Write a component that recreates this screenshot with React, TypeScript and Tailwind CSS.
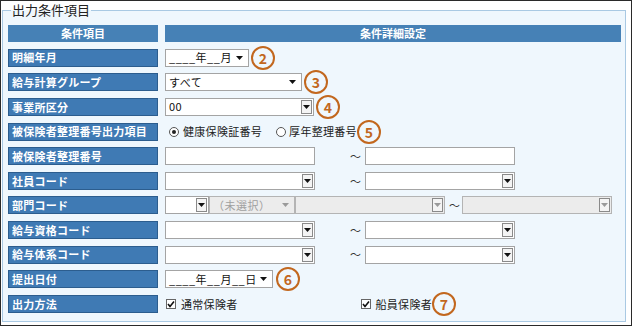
import React from "react";

const jp = { fontFamily: '"Noto Sans CJK JP", "Noto Sans", sans-serif' };

// 丸数字 (orange ring)
function Mark({ n }: { n: number }) {
  return (
    <div className="w-[24px] h-[24px] rounded-full border-2 border-[#c2671e] flex items-center justify-center text-[#c2671e] text-[14px] font-bold leading-none shrink-0">
      {n}
    </div>
  );
}

function Arrow({ boxed, disabled }: { boxed?: boolean; disabled?: boolean }) {
  return (
    <div
      className={
        boxed
          ? "w-[11px] h-[14px] mr-[1px] border border-[#8a8a8a] bg-[#f4f4f4] flex items-center justify-center shrink-0"
          : "w-[14px] h-[14px] mr-[2px] flex items-center justify-center shrink-0"
      }
    >
      <svg width="7" height="4" viewBox="0 0 7 4">
        <path d="M0 0 L7 0 L3.5 4 Z" fill={disabled ? "#9a9a9a" : "#111"} />
      </svg>
    </div>
  );
}

function Select({
  w,
  text,
  boxed = true,
  disabled,
  gray,
}: {
  w: number;
  text?: string;
  boxed?: boolean;
  disabled?: boolean;
  gray?: boolean;
}) {
  return (
    <div
      className={`h-[18px] border flex items-center shrink-0 ${
        gray ? "bg-[#ececec] border-[#b4b4b4]" : "bg-white border-[#a4a4a4]"
      }`}
      style={{ width: w }}
    >
      <span
        className={`flex-1 pl-[3px] text-[11px] tracking-[0.5px] leading-none whitespace-nowrap ${
          disabled ? "text-[#a0a0a0]" : "text-[#111]"
        }`}
      >
        {text}
      </span>
      <Arrow boxed={boxed} disabled={disabled} />
    </div>
  );
}

function Input({ w }: { w: number }) {
  return <div className="h-[18px] bg-white border border-[#a4a4a4] shrink-0" style={{ width: w }} />;
}

function Tilde({ w, pr }: { w: number; pr: number }) {
  return (
    <div className="text-[11px] text-[#333] text-right shrink-0" style={{ width: w, paddingRight: pr }}>
      ～
    </div>
  );
}

function Radio({ on }: { on?: boolean }) {
  return (
    <div className="w-[10px] h-[10px] rounded-full border border-[#555] bg-white flex items-center justify-center shrink-0">
      {on && <div className="w-[4px] h-[4px] rounded-full bg-[#222]" />}
    </div>
  );
}

function Check() {
  return (
    <div className="w-[10px] h-[10px] border border-[#666] bg-white flex items-center justify-center shrink-0">
      <svg width="8" height="8" viewBox="0 0 8 8">
        <path d="M1 4 L3 6.5 L7 1.5" stroke="#111" strokeWidth="1.6" fill="none" />
      </svg>
    </div>
  );
}

const rows: { label: string; body: React.ReactNode }[] = [
  {
    label: "明細年月",
    body: (
      <div className="flex items-center gap-[2px]">
        <Select w={84} text="____年__月" boxed={false} />
        <Mark n={2} />
      </div>
    ),
  },
  {
    label: "給与計算グループ",
    body: (
      <div className="flex items-center gap-[2px]">
        <Select w={137} text="すべて" boxed={false} />
        <Mark n={3} />
      </div>
    ),
  },
  {
    label: "事業所区分",
    body: (
      <div className="flex items-center gap-[2px]">
        <Select w={149} text="00" />
        <Mark n={4} />
      </div>
    ),
  },
  {
    label: "被保険者整理番号出力項目",
    body: (
      <div className="flex items-center text-[11px] tracking-[0.3px] text-[#222] pl-[4px]">
        <Radio on />
        <span className="ml-[4px]">健康保険証番号</span>
        <div className="ml-[14px]">
          <Radio />
        </div>
        <span className="ml-[3px]">厚年整理番号</span>
        <Mark n={5} />
      </div>
    ),
  },
  {
    label: "被保険者整理番号",
    body: (
      <div className="flex items-center">
        <Input w={150} />
        <Tilde w={50} pr={4} />
        <Input w={150} />
      </div>
    ),
  },
  {
    label: "社員コード",
    body: (
      <div className="flex items-center">
        <Select w={150} />
        <Tilde w={50} pr={4} />
        <Select w={150} />
      </div>
    ),
  },
  {
    label: "部門コード",
    body: (
      <div className="flex items-center">
        <Select w={44} />
        <Select w={86} text="（未選択）" boxed={false} disabled gray />
        <Select w={150} disabled gray />
        <Tilde w={17} pr={2} />
        <Select w={150} disabled gray />
      </div>
    ),
  },
  {
    label: "給与資格コード",
    body: (
      <div className="flex items-center">
        <Select w={150} />
        <Tilde w={50} pr={4} />
        <Select w={150} />
      </div>
    ),
  },
  {
    label: "給与体系コード",
    body: (
      <div className="flex items-center">
        <Select w={150} />
        <Tilde w={50} pr={4} />
        <Select w={150} />
      </div>
    ),
  },
  {
    label: "提出日付",
    body: (
      <div className="flex items-center gap-[3px]">
        <Select w={108} text="____年__月__日" boxed={false} />
        <Mark n={6} />
      </div>
    ),
  },
  {
    label: "出力方法",
    body: (
      <div className="flex items-center text-[11px] tracking-[0.3px] text-[#222] pl-[1px]">
        <Check />
        <span className="ml-[5px]">通常保険者</span>
        <div className="ml-[123px]">
          <Check />
        </div>
        <span className="ml-[5px]">船員保険者</span>
        <Mark n={7} />
      </div>
    ),
  },
];

export default function App() {
  return (
    <div className="w-[632px] h-[326px] border border-[#2a2a2a] bg-white overflow-hidden" style={jp}>
      <fieldset className="ml-[1px] mr-[5px] h-[321px] border border-[#a9c9e3] bg-[#eff7fd] pl-[5px] pr-[4px] pt-[6px]">
        <legend className="ml-[3px] px-[1px] text-[13px] leading-[18px] text-[#222]">出力条件項目</legend>

        <div className="grid grid-cols-[150px_1fr] gap-x-[7px] gap-y-[6.64px]">
          <div className="h-[17px] bg-[#4681b6] text-white text-[11px] font-bold flex items-center justify-center">
            条件項目
          </div>
          <div className="h-[17px] bg-[#4681b6] text-white text-[11px] font-bold flex items-center justify-center">
            条件詳細設定
          </div>

          {rows.map((row, i) => (
            <React.Fragment key={i}>
              <div className="h-[18px] bg-[#3f7ab4] border border-[#2c5d8e] text-white text-[11px] tracking-[0.25px] font-bold flex items-center pl-[3px] whitespace-nowrap">
                {row.label}
              </div>
              <div className="h-[18px] flex items-center">{row.body}</div>
            </React.Fragment>
          ))}
        </div>
      </fieldset>
    </div>
  );
}
